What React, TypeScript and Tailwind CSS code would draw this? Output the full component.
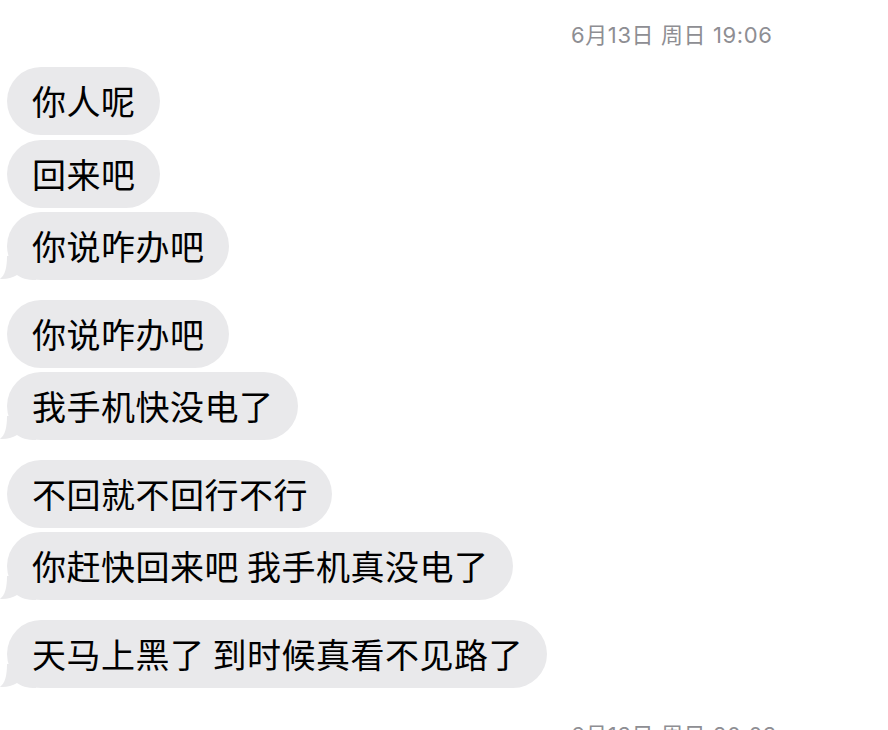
import React from "react";

const groups: string[][] = [
  ["你人呢", "回来吧", "你说咋办吧"],
  ["你说咋办吧", "我手机快没电了"],
  ["不回就不回行不行", "你赶快回来吧 我手机真没电了"],
  ["天马上黑了 到时候真看不见路了"],
];

function Tail() {
  return (
    <svg
      className="absolute left-[-7px] bottom-0"
      width="40"
      height="24"
      viewBox="0 0 40 24"
    >
      <path
        d="M7 0 C7 12 5 19 0 23 C6 23.5 12 22 17 19 C21 22 27 24 36 24 L36 0 Z"
        fill="#e9e9eb"
      />
    </svg>
  );
}

function Bubble({ text, tail }: { text: string; tail: boolean }) {
  return (
    <div className="relative flex h-[68px] items-center rounded-[34px] bg-[#e9e9eb] pl-[25px] pr-[24px]">
      {tail && <Tail />}
      <span className="relative whitespace-pre text-[34px] leading-[40px] tracking-[0.5px] text-black">
        {text}
      </span>
    </div>
  );
}

export default function App() {
  return (
    <div
      className="h-[730px] w-[888px] overflow-hidden bg-white"
      style={{ fontFamily: '"Noto Sans CJK SC", "Noto Sans", sans-serif' }}
    >
      <div
        className="pl-[571px] pt-[21px] text-[22px] leading-[28px] tracking-[0.6px] text-[#8e8e93] whitespace-pre"
        style={{ fontFamily: 'Inter, "Noto Sans CJK SC", sans-serif' }}
      >
        6月13日 周日 19:06
      </div>
      <div className="mt-[18px] flex flex-col gap-[19.5px] pl-[7px]">
        {groups.map((g, gi) => (
          <div key={gi} className="flex flex-col items-start gap-[4.5px]">
            {g.map((t, i) => (
              <Bubble key={i} text={t} tail={i === g.length - 1} />
            ))}
          </div>
        ))}
      </div>
      <div
        className="mt-[33px] pl-[571px] text-[22px] leading-[28px] tracking-[0.6px] text-[#8e8e93] whitespace-pre"
        style={{ fontFamily: 'Inter, "Noto Sans CJK SC", sans-serif' }}
      >
        6月13日 周日 20:03
      </div>
    </div>
  );
}
